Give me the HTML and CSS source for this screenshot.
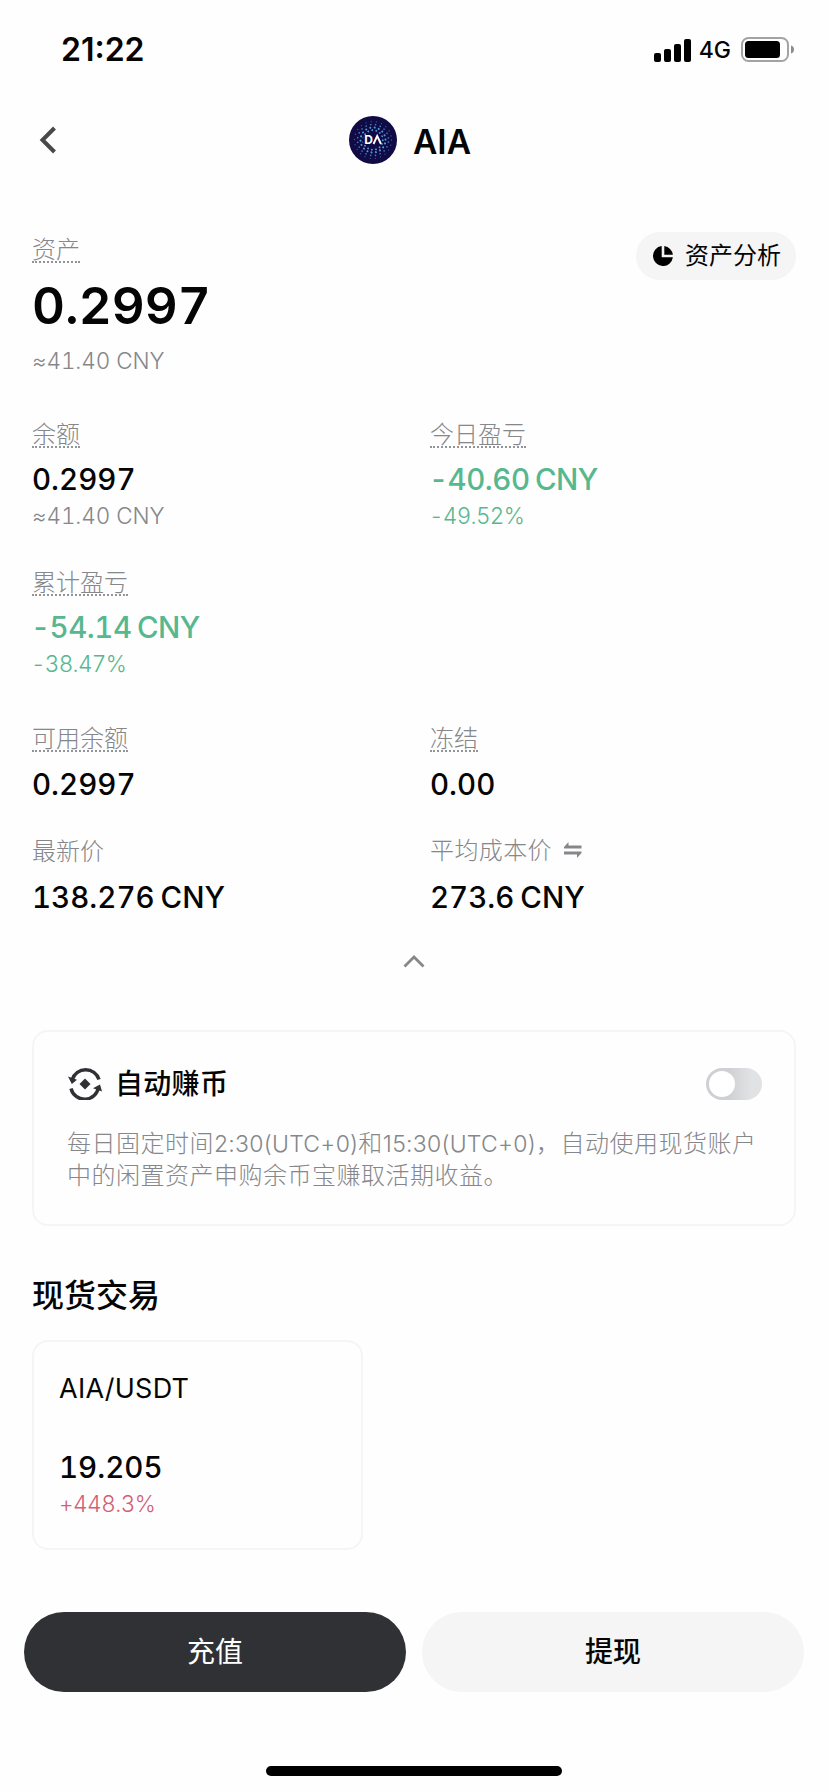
FILE: index.html
```html
<!DOCTYPE html>
<html lang="zh-CN">
<head>
<meta charset="utf-8">
<title>AIA</title>
<link rel="stylesheet" href="styles.css">
</head>
<body>
<main class="screen">
  <div class="status">
    <span class="time">21:22</span>
    <div class="status-right">
      <svg class="signal" width="37" height="23" viewBox="0 0 37 23"><rect y="14" width="7" height="9" rx="2"/><rect x="10" y="10" width="7" height="13" rx="2"/><rect x="20" y="5" width="7" height="18" rx="2"/><rect x="30" width="7" height="23" rx="2"/></svg>
      <span class="net">4G</span>
      <svg class="battery" width="54" height="26" viewBox="0 0 54 26"><rect x="1" y="1" width="46" height="23" rx="6.5" fill="none" stroke="#a3a3a3" stroke-width="2"/><rect x="4" y="4" width="35" height="17" rx="3.5"/><path d="M50 8.500c2 .6 3 2 3 4s-1 3.400-3 4z" fill="#8c8c8c"/></svg>
    </div>
  </div>

  <header class="nav">
    <svg class="back" width="20" height="30" viewBox="0 0 20 30"><path d="M17.500 3 5.500 15 17.500 27" fill="none" stroke="#48494b" stroke-width="4"/></svg>
    <div class="coin">
      <svg width="48" height="48" viewBox="0 0 48 48">
        <circle cx="24" cy="24" r="24" fill="#100a45"/>
        <g fill="none" stroke-linecap="round">
          <circle cx="24" cy="24" r="18.500" stroke="#3b5fa8" stroke-width="1.300" stroke-dasharray="0 5.300"/>
          <circle cx="24" cy="24" r="15.500" stroke="#3f78bd" stroke-width="1.700" stroke-dasharray="0 4.870" transform="rotate(8 24 24)"/>
          <circle cx="24" cy="24" r="12.500" stroke="#4b9bd2" stroke-width="2.100" stroke-dasharray="0 4.360" transform="rotate(16 24 24)"/>
          <circle cx="24" cy="24" r="9.800" stroke="#4e9cd6" stroke-width="1.900" stroke-dasharray="0 4.100" transform="rotate(24 24 24)"/>
        </g>
        <rect x="14" y="19" width="19" height="10" rx="4" fill="#100a45"/>
        <text class="logo-text" x="15.300" y="28">D</text>
        <path d="M24.500 28 28.200 20 32 28" fill="none" stroke="#fff" stroke-width="1.900"/>
      </svg>
      <h1 class="coin-name">AIA</h1>
    </div>
  </header>

  <section class="hero">
    <div class="hero-main">
      <span class="label dotted">资产</span>
      <strong class="total">0.2997</strong>
      <span class="sub">≈41.40 CNY</span>
    </div>
    <button class="pill">
      <svg width="20" height="20" viewBox="0 0 20 20"><path d="M8.700.1A10 10 0 1 0 19.900 11.300H8.700z"/><path d="M11.300.1A10 10 0 0 1 19.900 8.700H11.300z"/></svg>
      <span>资产分析</span>
    </button>
  </section>

  <section class="stats">
    <div class="stat"><span class="label dotted">余额</span><span class="value">0.2997</span><span class="sub">≈41.40 CNY</span></div>
    <div class="stat"><span class="label dotted">今日盈亏</span><span class="value down">-40.60 CNY</span><span class="sub down">-49.52%</span></div>
    <div class="stat"><span class="label dotted">累计盈亏</span><span class="value down">-54.14 CNY</span><span class="sub down">-38.47%</span></div>
  </section>
  <section class="stats prices">
    <div class="stat"><span class="label dotted">可用余额</span><span class="value">0.2997</span></div>
    <div class="stat"><span class="label dotted">冻结</span><span class="value">0.00</span></div>
    <div class="stat"><span class="label">最新价</span><span class="value">138.276 CNY</span></div>
    <div class="stat"><span class="label swap">平均成本价<svg width="18" height="16" viewBox="0 0 18 16"><path d="M0 6.500V5L4.500 0V3.500H17.500V6.500zM17.500 9.500V11L13 16V12.500H0V9.500z" fill="#85878a"/></svg></span><span class="value">273.6 CNY</span></div>
  </section>
  <div class="collapse"><svg width="24" height="15" viewBox="0 0 24 15"><path d="M2.500 12.500 12 3l9.500 9.500" fill="none" stroke="#85878a" stroke-width="2.800"/></svg></div>

  <section class="earn">
    <div class="earn-head">
      <svg width="34" height="32" viewBox="0 0 34 32"><g fill="none" stroke="#303135" stroke-width="3.400"><path d="M4.300 11.500A14 14 0 0 1 31 11.500"/><path d="M3 20.500A14 14 0 0 0 30.500 19"/></g><path d="M0 8.500 9 11.800 3.800 16zM34 23.500 25 20.200 32 16.500zM17 10.500 22.500 16 17 21.500 11.500 16z" fill="#303135"/></svg>
      <h2 class="earn-title">自动赚币</h2>
      <span class="toggle"><span class="knob"></span></span>
    </div>
    <p class="earn-text">每日固定时间<span class="latin">2:30(UTC+0)</span>和<span class="latin">15:30(UTC+0)</span>，自动使用现货账户<br>中的闲置资产申购余币宝赚取活期收益。</p>
  </section>

  <h2 class="section-title">现货交易</h2>
  <section class="pair">
    <span class="pair-name">AIA/USDT</span>
    <span class="value">19.205</span>
    <span class="sub up">+448.3%</span>
  </section>

  <footer class="actions">
    <button class="btn dark">充值</button>
    <button class="btn">提现</button>
  </footer>
  <div class="home"></div>
</main>
</body>
</html>
```
FILE: styles.css
```css
* { box-sizing: border-box; }
body { margin: 0; background: #fefefe; }
svg { display: block; flex: none; }
h1, h2, p { margin: 0; }
button { border: 0; padding: 0; font: inherit; color: inherit; }

.screen {
  width: 828px;
  height: 1792px;
  display: flex;
  flex-direction: column;
  overflow: hidden;
  color: #050505;
  font-family: Inter, "Noto Sans CJK SC", sans-serif;
}

.status { height: 100px; padding: 0 33px 0 61px; display: flex; justify-content: space-between; }
.time { font-size: 32px; font-weight: 600; line-height: 100px; }
.status-right { display: flex; align-items: center; }
.net { margin: 0 10px 0 8px; font-size: 23px; font-weight: 500; line-height: 102px; }

.nav { height: 80px; padding: 0 37px; display: grid; grid-template-columns: 60px 1fr 60px; align-items: center; }
.coin { display: flex; justify-content: center; align-items: center; gap: 16px; margin-right: 8px; }
.coin-name { font-size: 33.500px; font-weight: 600; line-height: 48px; padding-top: 4px; }
.logo-text { font: 700 12px Inter, sans-serif; fill: #fff; }

.hero { height: 232px; padding: 52px 32px 0; display: flex; justify-content: space-between; align-items: flex-start; }
.hero-main { display: flex; flex-direction: column; align-items: flex-start; margin-top: 1px; }
.label { display: block; font-size: 24px; font-weight: 300; line-height: 33px; height: 30px; color: #85878a; }
.dotted { border-bottom: 2px dotted #929496; }
.total { margin-top: 13px; font-size: 51px; font-weight: 600; line-height: 60px; height: 61px; }
.sub { font-size: 22.500px; font-weight: 300; line-height: 36px; height: 36px; color: #85878a; letter-spacing: -.1px; }
.total, .sub, .value { font-feature-settings: "tnum"; }
.hero .sub { margin-top: 6px; }
.pill { height: 48px; padding: 0 15px 0 17px; border-radius: 24px; display: flex; align-items: center; gap: 12px; background: #f5f5f5; font-size: 24px; line-height: 48px; }

.stats { padding: 6px 32px 0; display: grid; grid-template-columns: 398px 1fr; row-gap: 32px; }
.stat { display: flex; flex-direction: column; align-items: flex-start; }
.value { margin-top: 13px; font-size: 29.500px; font-weight: 500; line-height: 36px; height: 37px; word-spacing: -2px; }
.down { color: #57b78e; letter-spacing: -.5px; }
.value.down { margin-left: -1px; }
.sub.down { letter-spacing: -.7px; margin-left: -1px; }
.up { color: #d35f75; letter-spacing: -.5px; }
.prices { margin-top: 34px; row-gap: 32px; }
.prices .value { margin-top: 14px; }
.swap { display: flex; align-items: center; gap: 12px; letter-spacing: .4px; }
.collapse { display: flex; justify-content: center; margin-top: 38px; }

.earn { margin: 61px 32px 0; height: 196px; padding: 35px 32px 0 34px; border: 2px solid #f5f5f5; border-radius: 16px; }
.earn-head { display: flex; align-items: center; height: 34px; }
.earn-title { margin: 0 auto 0 13px; font-size: 28px; font-weight: 500; line-height: 34px; letter-spacing: .3px; }
.toggle { width: 56px; height: 32px; border-radius: 16px; padding: 3px; background: linear-gradient(90deg, #cfd0d3 40%, #e1e2e4 80%); }
.knob { display: block; width: 26px; height: 26px; border-radius: 50%; background: #fff; }
.earn-text { margin: 27px 0 0 -1px; font-size: 24px; font-weight: 300; line-height: 32px; color: #85878a; white-space: nowrap; letter-spacing: .5px; }
.latin { font-size: 23px; letter-spacing: .25px; }

.section-title { margin: 50px 32px 0; font-size: 32px; font-weight: 500; line-height: 40px; }
.pair { margin: 24px 32px 0; width: 331px; height: 210px; padding: 29px 25px 0; border: 2px solid #f5f5f5; border-radius: 16px; display: flex; flex-direction: column; }
.pair-name { font-size: 27px; line-height: 36px; letter-spacing: .25px; }
.pair .value { margin-top: 42px; }
.actions { margin: 62px 24px 0; display: grid; grid-template-columns: 1fr 1fr; gap: 16px; }
.btn { height: 80px; border-radius: 40px; background: #f5f5f5; font-size: 28px; font-weight: 500; line-height: 80px; }
.dark { background: #303135; color: #fff; font-weight: 400; }
.home { width: 296px; height: 10px; margin: 74px auto 0; border-radius: 5px; background: #000; }
```
